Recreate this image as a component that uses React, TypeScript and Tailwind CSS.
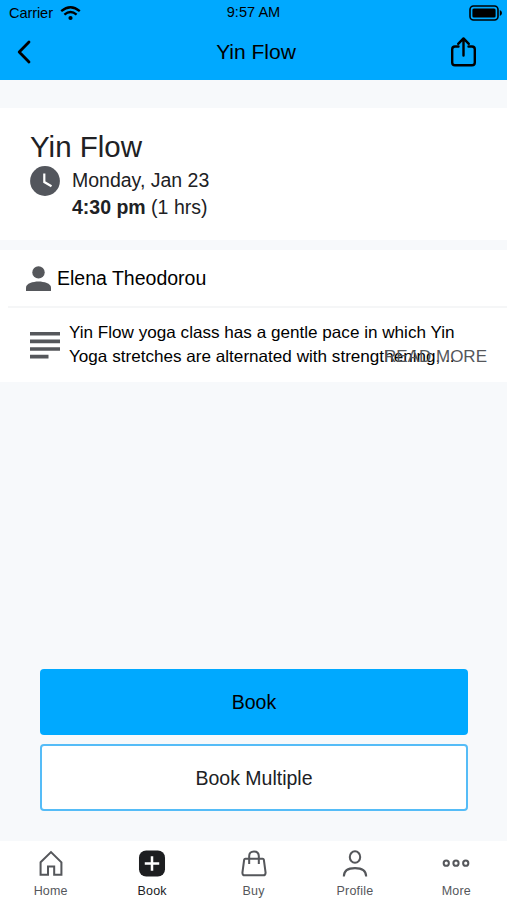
import type { ReactNode } from "react";

const tabs: { label: string; icon: ReactNode; active?: boolean }[] = [
    {
        label: "Home",
        icon: <path d="M3.2 12.8 L14 2.2 L24.8 12.8 V25.6 H17.3 V17.2 H10.9 V25.6 H3.2 Z" />,
    },
    {
        label: "Book",
        active: true,
        icon: (
            <>
                <rect x="0.5" y="0.5" width="27" height="27" rx="7.5" fill="#1d1e20" stroke="none" />
                <path d="M14 6.5 V21.5 M6.5 14 H21.5" stroke="#fff" strokeWidth="2.6" />
            </>
        ),
    },
    {
        label: "Buy",
        icon: (
            <>
                <path d="M5 9 H23 Q24 9 24.2 10 L26 23.5 Q26 26.2 23.5 26.2 H4.5 Q2 26.2 2 23.5 L3.8 10 Q4 9 5 9 Z" />
                <path d="M9 14.5 V6.5 Q9 1.5 14 1.5 Q19 1.5 19 6.5 V14.5" />
            </>
        ),
    },
    {
        label: "Profile",
        icon: (
            <>
                <ellipse cx="14" cy="7.3" rx="5.4" ry="5.9" />
                <path d="M2.4 27.5 C2.4 21.5 6.5 18.8 14 18.8 S25.6 21.5 25.6 27.5" />
            </>
        ),
    },
    {
        label: "More",
        icon: (
            <>
                <circle cx="3.9" cy="13.7" r="2.7" />
                <circle cx="14" cy="13.7" r="2.7" />
                <circle cx="24.1" cy="13.7" r="2.7" />
            </>
        ),
    },
];

function StatusBar() {
    return (
        <div className="flex h-6 items-center justify-between pl-[9px] pr-1 text-[14.6px]">
            <div className="flex flex-1 items-center gap-[7px]">
                <span className="mt-1 tracking-[-0.1px]">Carrier</span>
                <svg width="21" height="15" viewBox="0 0 21 15" fill="none" stroke="black" strokeWidth="2.3" className="mt-0.5">
                    <path d="M1.2 5.2 Q10.5 -2.8 19.8 5.2" />
                    <path d="M4.4 8.6 Q10.5 3.4 16.6 8.6" />
                    <circle cx="10.5" cy="12" r="2.1" fill="black" stroke="none" />
                </svg>
            </div>
            <span className="mr-[5px] mt-0.5">9:57 AM</span>
            <div className="flex flex-1 justify-end">
                <svg width="34" height="16" viewBox="0 0 34 16" className="mt-0.5">
                    <rect x="1" y="1" width="28" height="14" rx="3.5" fill="none" stroke="black" strokeWidth="1.6" />
                    <rect x="3.4" y="3.4" width="23.2" height="9.2" rx="1.5" />
                    <path d="M30.8 5 Q33 6 33 8 T30.8 11 Z" />
                </svg>
            </div>
        </div>
    );
}

function Header() {
    return (
        <header className="h-20 bg-[#00a9ff] text-black">
            <StatusBar />
            <div className="flex h-14 items-center pl-[17px] pr-[29px]">
                <div className="flex-1">
                    <svg width="28" height="24" viewBox="0 0 28 24" fill="none" stroke="black" strokeWidth="2.8" strokeLinecap="round" strokeLinejoin="round">
                        <path d="M12 2 L2.2 12 L12 22" />
                    </svg>
                </div>
                <h1 className="ml-[17px] text-[21px]">Yin Flow</h1>
                <div className="flex flex-1 justify-end">
                    <svg width="28" height="32" viewBox="0 0 28 32" fill="none" stroke="black" strokeWidth="2.4" strokeLinecap="round" strokeLinejoin="round">
                        <path d="M8.5 10.5 H5 Q2.2 10.5 2.2 13.3 V26.5 Q2.2 29.2 5 29.2 H22 Q24.8 29.2 24.8 26.5 V13.3 Q24.8 10.5 22 10.5 H18.5" />
                        <path d="M13.5 19.5 V3 M8.2 7.8 L13.5 2.4 L18.8 7.8" />
                    </svg>
                </div>
            </div>
        </header>
    );
}

export default function App() {
    return (
        <div className="flex h-[900px] w-[507px] flex-col overflow-hidden bg-[#f7f9fb] font-['Liberation_Sans',sans-serif] text-[#202124]">
            <Header />
            <main className="flex flex-1 flex-col pt-7">
                <section className="h-[132px] bg-white px-[30px] pt-[21px]">
                    <h2 className="text-[29.5px] leading-[36px]">Yin Flow</h2>
                    <div className="flex gap-3 text-[19.5px] leading-[27px]">
                        <svg width="30" height="30" viewBox="0 0 30 30" className="mt-[1px]">
                            <circle cx="15" cy="15" r="14.9" fill="#53565d" />
                            <path d="M14.3 7.5 V16 L21.5 20.2" fill="none" stroke="white" strokeWidth="2.2" />
                        </svg>
                        <div className="mt-0.5">
                            <p>Monday, Jan 23</p>
                            <p><b>4:30 pm</b> (1 hrs)</p>
                        </div>
                    </div>
                </section>
                <section className="mt-2.5 bg-white text-black">
                    <div className="ml-2 flex h-[58px] items-center gap-1.5 border-b-2 border-[#f5f6f7] pl-[18px]">
                        <svg width="25" height="25" viewBox="0 0 25 25" fill="#55575b">
                            <circle cx="12.5" cy="6.4" r="6.2" />
                            <path d="M0 25 V21.5 C0 17.5 7 15.5 12.5 15.5 S25 17.5 25 21.5 V25 Z" />
                        </svg>
                        <p className="pt-0.5 text-[19.5px]">Elena Theodorou</p>
                    </div>
                    <div className="relative flex h-[74px] pl-[30px] pt-[13px]">
                        <svg width="30" height="27" viewBox="0 0 30 27" fill="#55575b" className="mt-[11px] shrink-0">
                            <path d="M0 0 H30 V3.6 H0 Z M0 7.6 H30 V11.2 H0 Z M0 15.2 H30 V18.8 H0 Z M0 22.8 H18.5 V26.4 H0 Z" />
                        </svg>
                        <p className="ml-[9px] whitespace-nowrap text-[17.13px] leading-6">
                            Yin Flow yoga class has a gentle pace in which Yin
                            <br />
                            Yoga stretches are alternated with strengthening, ..
                        </p>
                        <button className="absolute right-5 top-[37px] text-[17px] leading-6 text-[#55575b]">READ MORE</button>
                    </div>
                </section>
                <div className="mt-auto flex flex-col gap-[9px] pb-[30px] pl-10 pr-[39px] text-[19.5px]">
                    <button className="h-[66px] rounded bg-[#00a9ff] pt-0.5 text-black">Book</button>
                    <button className="h-[67px] rounded border-2 border-[#55bcf7] bg-white pt-0.5">Book Multiple</button>
                </div>
            </main>
            <nav className="flex h-[59px] bg-white text-[12.5px] tracking-[0.2px] text-[#55575b]">
                {tabs.map(({ label, icon, active }) => (
                    <button key={label} className={`flex flex-1 flex-col items-center pt-[9px] ${active ? "text-[#202124]" : ""}`}>
                        <svg width="28" height="28" viewBox="0 0 28 28" fill="none" stroke="currentColor" strokeWidth="2.1">
                            {icon}
                        </svg>
                        <span className="mt-[5px] leading-[18px]">{label}</span>
                    </button>
                ))}
            </nav>
        </div>
    );
}
